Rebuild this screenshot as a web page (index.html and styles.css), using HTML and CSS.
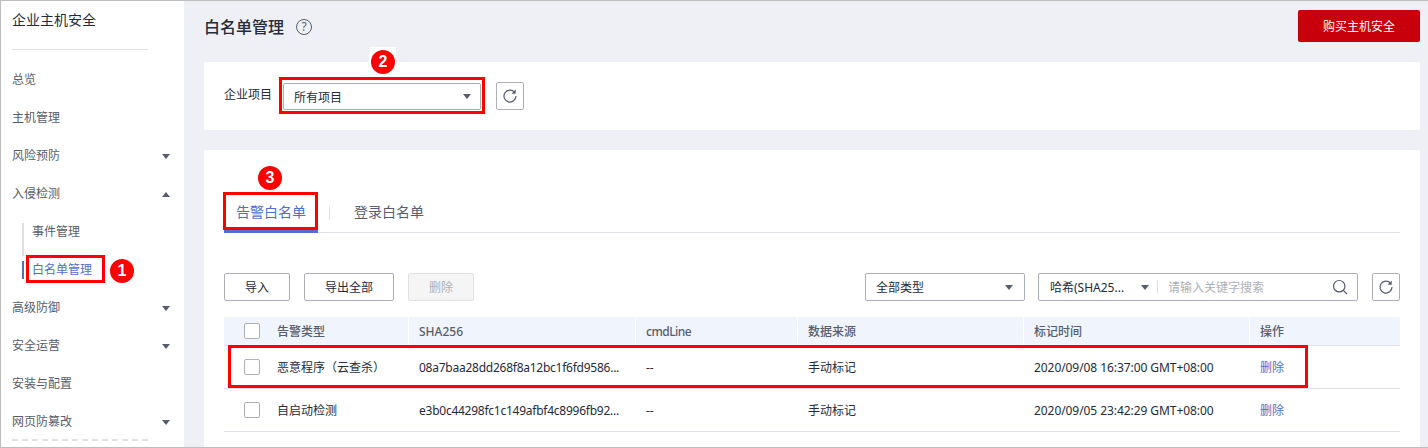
FILE: index.html
```html
<!DOCTYPE html>
<html lang="zh">
<head>
<meta charset="utf-8">
<title>白名单管理</title>
<link rel="stylesheet" href="styles.css">
</head>
<body>
<div class="app">
  <aside class="side">
    <div class="side-title">企业主机安全</div>
    <nav class="menu">
      <div class="item">总览</div>
      <div class="item">主机管理</div>
      <div class="item">风险预防<i class="caret"></i></div>
      <div class="item">入侵检测<i class="caret up"></i></div>
      <div class="item sub"><span class="rail"></span>事件管理</div>
      <div class="item sub active"><span class="rail"></span>白名单管理</div>
      <div class="item">高级防御<i class="caret"></i></div>
      <div class="item">安全运营<i class="caret"></i></div>
      <div class="item">安装与配置</div>
      <div class="item">网页防篡改<i class="caret"></i></div>
    </nav>
    <div class="side-dash"></div>
  </aside>
  <main class="main">
    <header class="head">
      <h1 class="page-title">白名单管理</h1>
      <span class="help">?</span>
      <button class="buy">购买主机安全</button>
    </header>
    <section class="panel filter">
      <label class="filter-label">企业项目</label>
      <div class="control project">所有项目<i class="caret"></i></div>
      <button class="icon-btn">
        <svg viewBox="0 0 16 16" width="16" height="16"><path class="ico" d="M12.6 4.2A6 6 0 1 0 14 8"/><path class="ico-fill" d="M13.7 1.6v4.2H9.6z"/></svg>
      </button>
    </section>
    <section class="panel content">
      <div class="tabs">
        <div class="tab active">告警白名单</div>
        <span class="tab-sep"></span>
        <div class="tab">登录白名单</div>
      </div>
      <div class="toolbar">
        <button class="btn w66">导入</button>
        <button class="btn w90">导出全部</button>
        <button class="btn w66 disabled">删除</button>
        <div class="spacer"></div>
        <div class="control type">全部类型<i class="caret"></i></div>
        <div class="control search">
          <span class="hash">哈希(SHA25...</span><i class="caret"></i>
          <span class="search-sep"></span>
          <span class="placeholder">请输入关键字搜索</span>
          <svg class="mag" viewBox="0 0 16 16" width="16" height="16"><circle class="ico" cx="7.2" cy="7.2" r="5.7"/><path class="ico" d="M11.3 11.3l3.7 3.7"/></svg>
        </div>
        <button class="icon-btn">
          <svg viewBox="0 0 16 16" width="16" height="16"><path class="ico" d="M12.6 4.2A6 6 0 1 0 14 8"/><path class="ico-fill" d="M13.7 1.6v4.2H9.6z"/></svg>
        </button>
      </div>
      <div class="table">
        <div class="row thead">
          <div class="cell first"><span class="check"></span>告警类型</div>
          <div class="cell">SHA256</div>
          <div class="cell"><span class="tight-l">cmdLine</span></div>
          <div class="cell">数据来源</div>
          <div class="cell">标记时间</div>
          <div class="cell">操作</div>
        </div>
        <div class="row">
          <div class="cell first"><span class="check"></span>恶意程序（云查杀）</div>
          <div class="cell"><span class="tight-h">08a7baa28dd268f8a12bc1f6fd9586...</span></div>
          <div class="cell">--</div>
          <div class="cell">手动标记</div>
          <div class="cell"><span class="tight-d">2020/09/08 16:37:00 GMT+08:00</span></div>
          <div class="cell link">删除</div>
        </div>
        <div class="row">
          <div class="cell first"><span class="check"></span>自启动检测</div>
          <div class="cell"><span class="tight-h">e3b0c44298fc1c149afbf4c8996fb92...</span></div>
          <div class="cell">--</div>
          <div class="cell">手动标记</div>
          <div class="cell"><span class="tight-d">2020/09/05 23:42:29 GMT+08:00</span></div>
          <div class="cell link">删除</div>
        </div>
      </div>
    </section>
  </main>
</div>
<div class="mark box-1"></div>
<div class="mark box-2"></div>
<div class="mark box-3"></div>
<div class="mark box-4"></div>
<div class="patch"></div>
<div class="badge badge-1">1</div>
<div class="badge badge-2">2</div>
<div class="badge badge-3">3</div>
</body>
</html>
```
FILE: styles.css
```css
* { box-sizing: border-box; }
html, body { margin: 0; padding: 0; }
body {
  width: 1428px;
  height: 448px;
  overflow: hidden;
  position: relative;
  font-family: "Noto Sans", "Noto Sans CJK SC", sans-serif;
  font-size: 12px;
  color: #252b3a;
}
.app {
  display: flex;
  height: 448px;
  background: #eff0f5;
  border: 1px solid #bdbdbd;
  border-width: 1px 0 1px 1px;
  overflow: hidden;
}
.side {
  width: 183px;
  flex: none;
  background: #fff;
  padding: 0 0 0 11px;
}
.side-title {
  height: 49px;
  width: 136px;
  padding-top: 9px;
  font-size: 14px;
  line-height: 19px;
  border-bottom: 1px solid #dfe1e6;
}
.menu { padding-top: 11px; }
.item {
  height: 38px;
  line-height: 38px;
  color: #575d6c;
  position: relative;
  width: 158px;
  display: flex;
  align-items: center;
  justify-content: space-between;
}
.item.sub { padding-left: 20px; justify-content: flex-start; }
.item.active { color: #526ecc; }
.rail {
  position: absolute;
  left: 10px;
  top: 10px;
  bottom: 0;
  width: 2px;
  background: #dfe1e6;
}
.item.sub + .item.sub .rail { top: 0; bottom: 33px; }
.item.active::before {
  content: "";
  position: absolute;
  left: 10px;
  top: 10px;
  width: 2px;
  height: 18px;
  background: #526ecc;
}
.caret {
  width: 0;
  height: 0;
  flex: none;
  border-left: 4px solid transparent;
  border-right: 4px solid transparent;
  border-top: 5px solid #575d6c;
}
.caret.up { border-top: 0; border-bottom: 5px solid #575d6c; }
.side-dash {
  width: 136px;
  margin-top: -2px;
  border-top: 2px dashed #dfe1e6;
}
.main {
  flex: 1;
  padding: 0 8px 0 20px;
  min-width: 0;
}
.head {
  height: 61px;
  display: flex;
  align-items: flex-start;
}
.page-title {
  margin: 16px 0 0;
  font-size: 16px;
  line-height: 21px;
  font-weight: 500;
}
.help {
  width: 16px;
  height: 16px;
  margin: 18px 0 0 12px;
  border: 1px solid #575d6c;
  border-radius: 50%;
  font-size: 12px;
  line-height: 14px;
  text-align: center;
  color: #575d6c;
}
.buy {
  margin: 9px 0 0 auto;
  width: 122px;
  height: 32px;
  border: 0;
  border-radius: 2px;
  background: #c7000b;
  color: #fff;
  font: inherit;
  padding: 0;
}
.panel { background: #fff; }
.filter {
  height: 68px;
  display: flex;
  align-items: center;
  padding-left: 20px;
}
.filter-label { width: 59px; margin-top: -4px; }
.control {
  height: 28px;
  display: flex;
  align-items: center;
  border: 1px solid #adb0b8;
  border-radius: 2px;
  padding-left: 11px;
  background: #fff;
}
.project { width: 198px; height: 27px; padding: 0 9px 0 10px; justify-content: space-between; margin-top: 1px; }
.icon-btn {
  width: 28px;
  height: 28px;
  padding: 0;
  border: 1px solid #adb0b8;
  border-radius: 2px;
  background: #fff;
  display: flex;
  align-items: center;
  justify-content: center;
  flex: none;
}
.filter .icon-btn { margin: 0 0 0 15px; }
.ico { fill: none; stroke: #575d6c; stroke-width: 1.2; }
.ico-fill { fill: #575d6c; }
.content {
  margin-top: 20px;
  height: 297px;
  padding: 0 20px;
}
.tabs {
  height: 83px;
  display: flex;
  align-items: flex-end;
  border-bottom: 1px solid #dfe1e6;
}
.tab {
  height: 42px;
  line-height: 44px;
  font-size: 14px;
  color: #575d6c;
  padding: 0 12px;
}
.tab.active {
  width: 94px;
  color: #526ecc;
  border-bottom: 3px solid #526ecc;
  margin-bottom: -1px;
  height: 43px;
}
.tab-sep {
  width: 1px;
  height: 14px;
  background: #dfe1e6;
  margin: 0 12px 12px 11px;
}
.toolbar {
  margin-top: 40px;
  height: 28px;
  display: flex;
  align-items: center;
}
.btn {
  height: 28px;
  border: 1px solid #adb0b8;
  border-radius: 2px;
  background: #fff;
  color: #252b3a;
  font: inherit;
  padding: 0;
  margin-right: 14px;
}
.w66 { width: 66px; }
.w90 { width: 90px; }
.btn.disabled {
  background: #f5f5f6;
  border-color: #dfe1e6;
  color: #adb0b8;
}
.spacer { flex: 1; }
.type { width: 160px; padding: 0 11px 0 10px; justify-content: space-between; }
.search { width: 320px; margin: 0 14px 0 13px; padding-right: 9px; }
.hash { width: 89px; white-space: nowrap; }
.search .caret { margin-left: 2px; }
.search-sep { width: 1px; height: 14px; background: #dfe1e6; margin: 0 10px 0 8px; }
.placeholder { color: #adb0b8; }
.mag { margin-left: auto; }
.table { margin-top: 16px; }
.row {
  display: grid;
  grid-template-columns: 184px 227px 162px 226px 226px 151px;
  height: 43px;
  align-items: center;
  border-bottom: 1px solid #dfe1e6;
}
.row .cell { padding-left: 11px; white-space: nowrap; display: flex; align-items: center; height: 100%; }
.row .cell.first { padding-left: 20px; }
.check {
  width: 16px;
  height: 16px;
  flex: none;
  margin-right: 17px;
  border: 1px solid #adb0b8;
  border-radius: 2px;
  background: #fff;
}
.thead {
  height: 29px;
  background: #f0f4fc;
  color: #575d6c;
  font-weight: 500;
}
.thead .cell + .cell { border-left: 1px solid #fff; padding-left: 10px; }
.tight-h { letter-spacing: -0.25px; }
.tight-d { letter-spacing: -0.07px; }
.tight-l { letter-spacing: -0.5px; }
.link { color: #526ecc; }
.mark {
  position: absolute;
  border: 3px solid #f00;
}
.box-1 { left: 26px; top: 255px; width: 79px; height: 28px; }
.box-2 { left: 279px; top: 77px; width: 206px; height: 37px; }
.box-3 { left: 223px; top: 192px; width: 95px; height: 38px; }
.box-4 { left: 228px; top: 345px; width: 1080px; height: 43px; }
.patch {
  position: absolute;
  left: 369px;
  top: 47px;
  width: 27px;
  height: 15px;
  background: #fff;
}
.badge {
  position: absolute;
  width: 24px;
  height: 24px;
  border-radius: 50%;
  background: #f00;
  color: #fff;
  font-family: "Liberation Sans", sans-serif;
  font-size: 16px;
  font-weight: 700;
  line-height: 24px;
  text-align: center;
}
.badge-1 { left: 110px; top: 259px; }
.badge-2 { left: 371px; top: 50px; }
.badge-3 { left: 258px; top: 166px; }
```
